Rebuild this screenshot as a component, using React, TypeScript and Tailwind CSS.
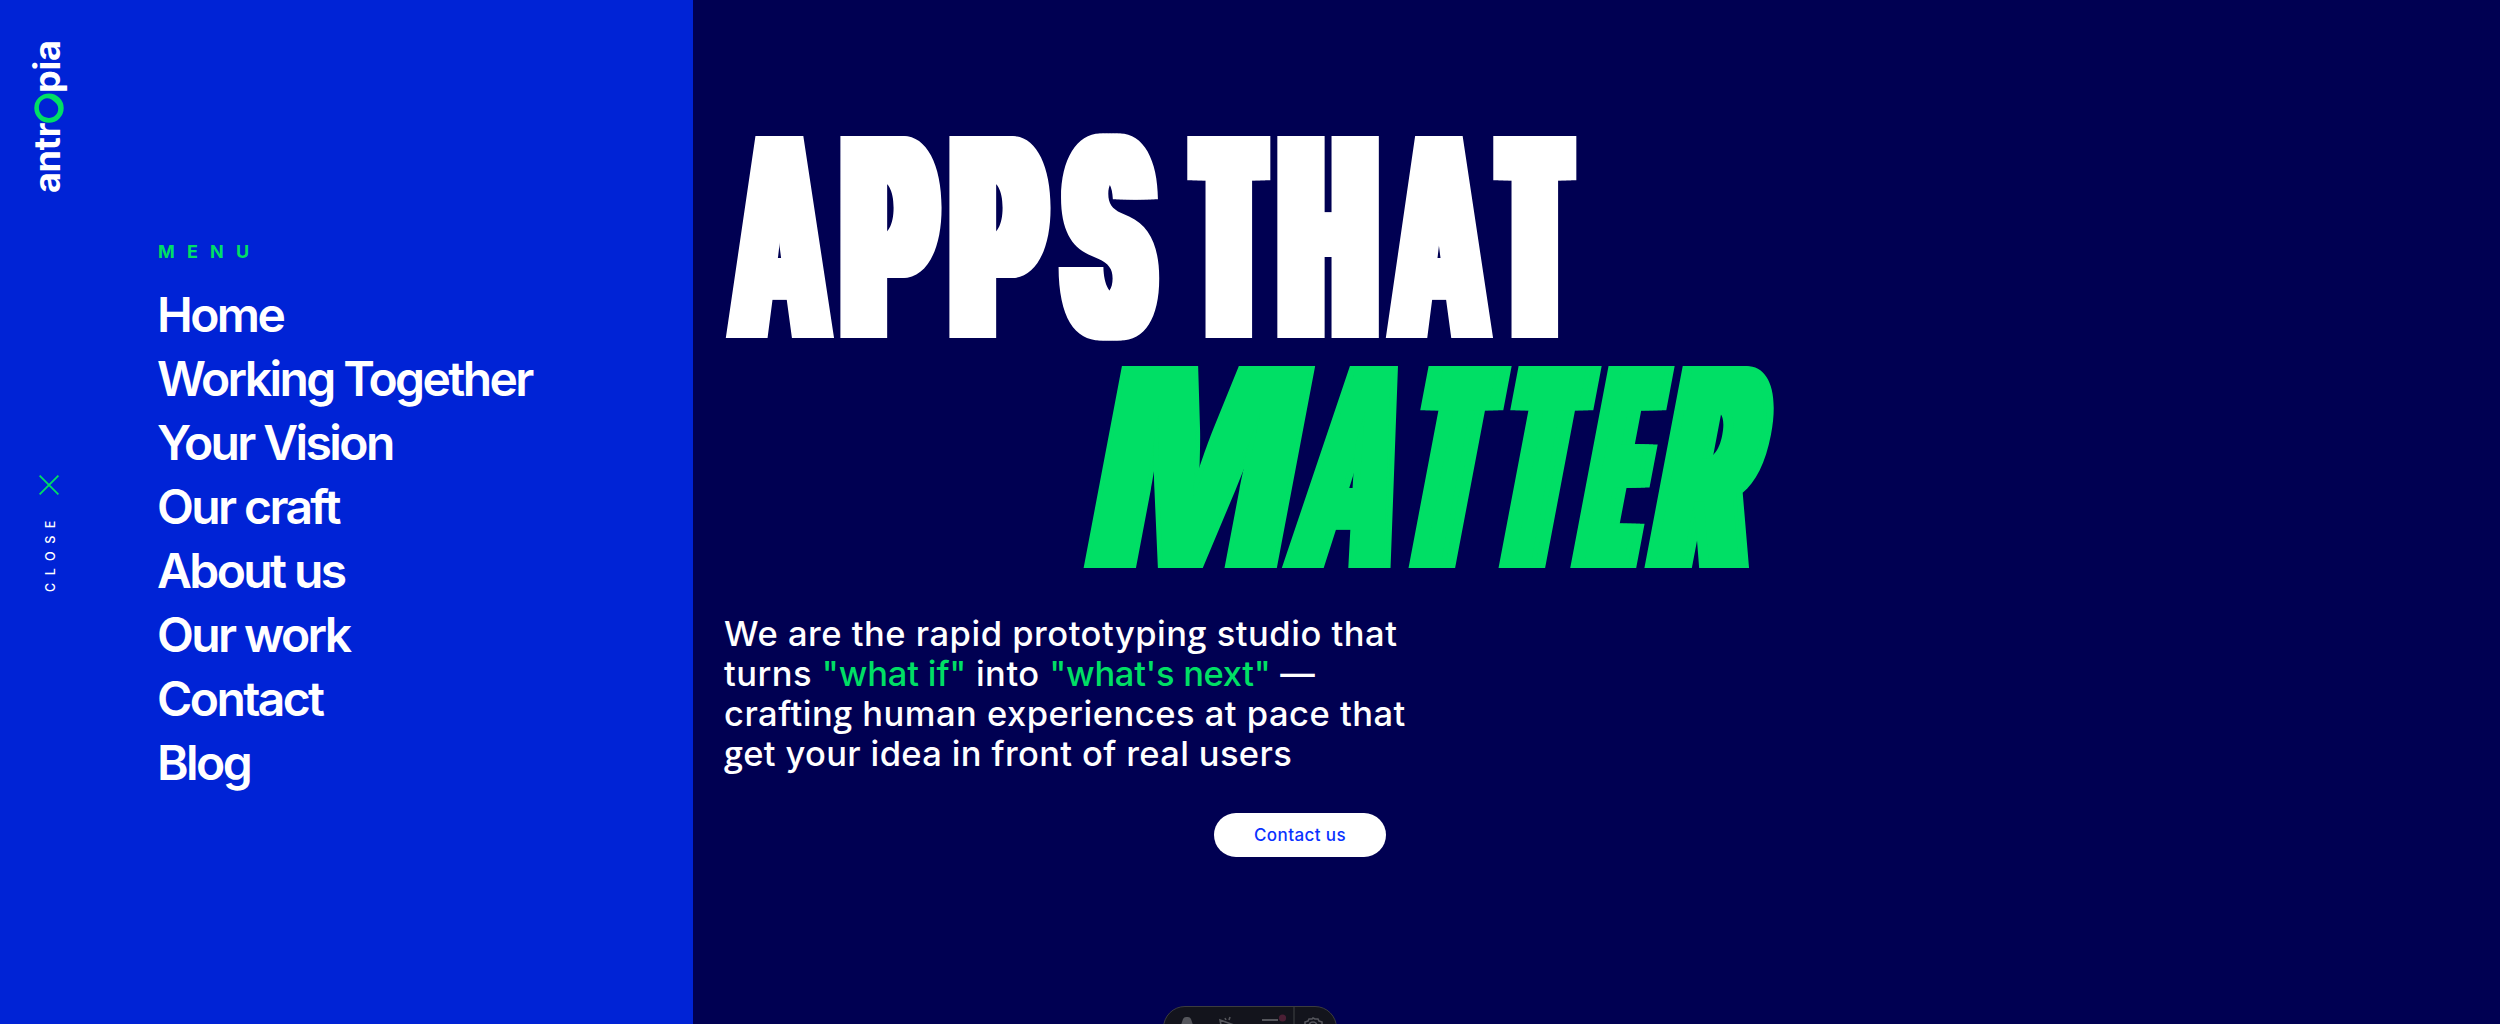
type Glyph = {
  ch: string;
  /* gap before the glyph, drawn width and horizontal thickening, in px */
  gap: number;
  w: number;
  bold: number;
};

/* ink bounds of Inter Black capitals, in hundredths of an em */
const INK: Record<string, [number, number]> = {
  A: [1.6, 78],
  P: [4.4, 63.6],
  S: [2.4, 63.6],
  T: [2.4, 66],
  H: [4.4, 70.8],
  M: [4.4, 91],
  E: [4.4, 58],
  R: [4.4, 65.5],
};

const SIZE = 277.5;

const appsThat: Glyph[] = [
  { ch: 'A', gap: -1, w: 110, bold: 7 },
  { ch: 'P', gap: 5.3, w: 102.3, bold: 9.5 },
  { ch: 'P', gap: 6.6, w: 102.3, bold: 9.5 },
  { ch: 'S', gap: 6.6, w: 101, bold: 10 },
  { ch: ' ', gap: 0, w: 28.4, bold: 0 },
  { ch: 'T', gap: 0, w: 83.4, bold: 15 },
  { ch: 'H', gap: 6.4, w: 102.4, bold: 12 },
  { ch: 'A', gap: 5.3, w: 109, bold: 7 },
  { ch: 'T', gap: -0.7, w: 83.4, bold: 15 },
];

const matter: Glyph[] = [
  { ch: 'M', gap: 0, w: 194, bold: 5 },
  { ch: 'A', gap: 4, w: 110.5, bold: 7 },
  { ch: 'T', gap: -1.5, w: 83.4, bold: 15 },
  { ch: 'T', gap: 6.6, w: 83.4, bold: 15 },
  { ch: 'E', gap: 6.6, w: 67, bold: 13 },
  { ch: 'R', gap: 7, w: 105, bold: 10 },
];

function Letter({ ch, gap, w, bold }: Glyph) {
  const ink = INK[ch];
  if (!ink) {
    return (
      <span className="overflow-hidden whitespace-pre" style={{ width: w }}>
        {' '}
      </span>
    );
  }
  const unit = SIZE / 100;
  const scale = (w - 2 * bold) / ((ink[1] - ink[0]) * unit);
  const shift = bold - ink[0] * unit * scale;
  const shadow = [-1, -0.66, -0.33, 0.33, 0.66, 1]
    .map((k) => `${(k * bold) / scale}px 0 0 currentColor`)
    .join(', ');
  return (
    <span className="block shrink-0" style={{ width: w, marginLeft: gap }}>
      <span
        className="block w-max origin-top-left"
        style={{ transform: `translateX(${shift}px) scaleX(${scale})`, textShadow: shadow }}
      >
        {ch}
      </span>
    </span>
  );
}

function DoubleG() {
  return <span className="font-['Open_Sans'] text-[34px] leading-none font-semibold">g</span>;
}

const links = ['Home', 'Working Together', 'Your Vision', 'Our craft', 'About us', 'Our work', 'Contact', 'Blog'];

function Logo() {
  return (
    <a className="flex rotate-180 items-center text-[36px] leading-[40px] font-[650] tracking-[-0.2px] text-white [writing-mode:vertical-rl]">
      <span className="mr-[-2px] ml-[2px]">antr</span>
      <svg className="h-[30px] w-[30px] rotate-180" viewBox="0 0 30 30">
        <path
          fillRule="evenodd"
          fill="#00df65"
          d="M15 .3a14.7 14.7 0 1 1 0 29.4a14.7 14.7 0 0 1 0-29.4ZM12.8 5.2C8 5.6 4.8 9.8 4.9 15c.1 5.6 4.3 9.8 9.7 9.8c5.5 0 9.6-4 9.6-9.2c0-2.8-1.2-4.8-3.5-6.6C18 6.8 16 5 12.8 5.2Z"
        />
      </svg>
      <span className="mr-[-2px] ml-[2px]">pia</span>
    </a>
  );
}

function Toolbar() {
  return (
    <div className="absolute top-[1006px] left-[1163px] flex h-[48px] w-[174px] rounded-[22px] border border-[#3b3c3e] bg-[#13141c] text-[#55565c]">
      <svg className="h-full w-full" viewBox="0 0 172 46" fill="none" stroke="currentColor" strokeWidth="1.6">
        <path d="M17 18l2-6q1-2 3-2h2q2 0 3 2l2 6z" fill="currentColor" stroke="none" />
        <path d="M57 18l-1-5 14 5M61 11l1 2M66 10l-1 3" />
        <path d="M98 13h16" strokeWidth="2" />
        <circle cx="118.5" cy="11" r="3.6" fill="#4b1f35" stroke="none" />
        <path d="M130 0v46" stroke="#303136" />
        <circle cx="149" cy="19" r="4" />
        <path d="M141 18v-3l3-1 1-2h3l1-1 2 1h3l1 2 3 1v3" />
      </svg>
    </div>
  );
}

export default function App() {
  return (
    <div className="relative flex h-[1024px] w-[2500px] overflow-hidden bg-[#000052] font-['Inter',sans-serif] text-white">
      <aside className="flex h-full w-[693px] shrink-0 bg-[#0023d6]">
        <div className="flex w-[98px] shrink-0 flex-col items-center pt-[40px]">
          <div className="flex h-[435px] items-start">
            <Logo />
          </div>
          <button className="flex flex-col items-center">
            <svg className="h-[20px] w-[20px]" viewBox="0 0 20 20" stroke="#00df65" strokeWidth="1.8">
              <path d="M.6.6l18.8 18.8M19.4.6L.6 19.4" />
            </svg>
            <span className="mt-[18px] ml-[3px] rotate-180 text-[12.5px] leading-[20px] font-medium tracking-[7.6px] [writing-mode:vertical-rl]">
              CLOSE
            </span>
          </button>
        </div>
        <nav className="pt-[241px] pl-[60px]">
          <h2 className="text-[18px] leading-[21px] font-bold tracking-[12.2px] text-[#00df65]">MENU</h2>
          <ul className="mt-[21px] -ml-px text-[48px] leading-[64px] font-[570] tracking-[-2.6px]">
            {links.map((l) => (
              <li key={l}>{l}</li>
            ))}
          </ul>
        </nav>
      </aside>
      <main className="flex flex-col items-start pt-[122px] pl-[33px]">
        <h1 className="text-[277.5px] leading-[230px] font-black">
          <span className="flex h-[230px]">
            {appsThat.map((g, i) => (
              <Letter key={i} {...g} />
            ))}
          </span>
          <span className="ml-[356.7px] flex h-[230px] origin-[0_216px] -skew-x-[10.75deg] text-[#00df65]">
            {matter.map((g, i) => (
              <Letter key={i} {...g} />
            ))}
          </span>
        </h1>
        <p className="mt-[32px] -ml-[2px] h-[160px] text-[34.5px] leading-[40px] font-[540] tracking-[0.5px] whitespace-nowrap">
          <span className="tracking-[0.52px]">
            We are the rapid prototypin<DoubleG /> studio that
          </span>
          <br />
          turns <span className="tracking-[-0.15px] text-[#00df65]">"what if"</span> into{' '}
          <span className="tracking-[-0.3px] text-[#00df65]">"what's next"</span> —
          <br />
          craftin<DoubleG /> human experiences at pace that
          <br />
          <span className="tracking-[0.36px]">
            <DoubleG />
            et your idea in front of real users
          </span>
        </p>
        <a className="mt-[39px] ml-[488px] flex h-[44px] w-[172px] items-center justify-center rounded-full bg-white pt-px text-[17px] font-[450] tracking-[0.4px] text-[#0a32ff]">
          Contact us
        </a>
      </main>
      <Toolbar />
    </div>
  );
}
